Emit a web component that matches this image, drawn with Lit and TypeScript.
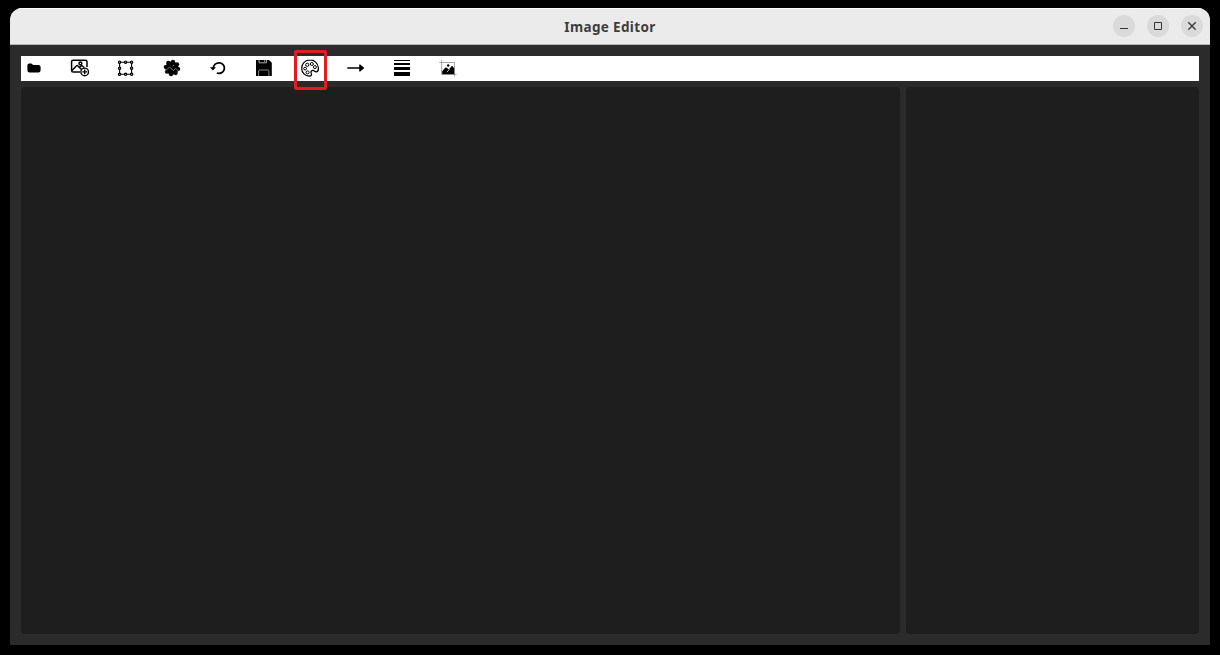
import { LitElement, html, css, svg } from "lit";
import { customElement } from "lit/decorators.js";

const glyphs = [
  { name: "Open", art: svg`<path d="M3.4 7.2Q3.4 5.4 5.2 5.4H7.2Q8.4 5.4 9 6.9H14.5Q16.6 7 16.6 9V12.2Q16.6 14.4 14.4 14.4H5.6Q3.4 14.4 3.4 12.2Z"/>` },
  { name: "Add image", art: svg`<g fill="none" stroke="#000" stroke-width="1.5" stroke-linejoin="round">
      <path d="M10 14H3.2Q1.6 14 1.6 12.4V3.6Q1.6 2.2 3.2 2.2H15.4Q17 2.2 17 3.8V9"/>
      <path d="M2 12.5L6.3 8Q7.1 7.1 8 8L11.5 11.5"/><circle cx="10.4" cy="5.4" r="1.4"/>
      <path d="M9.5 9.2L11 8Q12 7.4 13 8.5L14.2 9.5"/></g>
      <circle cx="14.7" cy="13.9" r="3.8" fill="#fff" stroke="#000" stroke-width="1.4"/>
      <path d="M14.7 11.5V16.3M12.3 13.9H17.1" stroke="#000" stroke-width="1.4"/>` },
  { name: "Select", art: svg`<path d="M3.6 4.2H15.6V16.3H3.6Z" fill="none" stroke="#000" stroke-width="1.1"/>
      ${[[3.6,4.2],[9.6,4.2],[15.6,4.2],[3.6,10.2],[15.6,10.2],[3.6,16.3],[9.6,16.3],[15.6,16.3]].map(
        ([x, y]) => svg`<circle cx=${x} cy=${y} r="1.2" fill="#999" stroke="#000" stroke-width="1.1"/>`)}` },
  { name: "Filter", art: svg`<circle cx="10" cy="10" r="6.7"/>
      ${Array.from({ length: 8 }, (_, i) => {
        const a = ((i + 0.2) * Math.PI) / 4;
        return svg`<circle cx=${10 + 6.3 * Math.cos(a)} cy=${10 + 6.3 * Math.sin(a)} r="2.1"/>`;
      })}
      <path d="M3 13.4L7 9.5Q7.6 8.9 8.2 9.5L11.3 12.7L13.2 10.8Q13.7 10.4 14.2 10.9L16.8 13.4M10.6 8L12 7.2" fill="none" stroke="#aaa" stroke-width=".7"/>` },
  { name: "Undo", art: svg`<path d="M5.4 10.2A5.5 5.3 0 1 1 8.8 15" fill="none" stroke="#000" stroke-width="1.75"/><path d="M1.9 9.2H8L4.9 12.4Z"/>` },
  { name: "Save", art: svg`<path d="M2 2H15L17.8 4.8V18H2Z"/>
      <path d="M5 2V4.8H12.6V2" fill="none" stroke="#bbb" stroke-width=".9"/><rect x="10.2" y="2.3" width="1.1" height="1.5" fill="#bbb"/>
      <path d="M4.6 18V13Q4.6 12 5.6 12H13.9Q14.9 12 14.9 13V18" fill="none" stroke="#aaa" stroke-width=".8"/>` },
  { name: "Colors", art: svg`<g fill="none" stroke="#000" stroke-width="1.25">
      <path d="M10 1.9C5.2 1.9 1.7 5.7 1.7 10.2C1.7 14.8 5.3 18.1 9.2 18.1C11.5 18.1 12 16.5 11.2 15.1C10.5 13.7 11.5 12.1 13.1 12.4C14.4 12.7 14.8 14 16.4 13.8C18 13.5 18.6 11.5 18.4 9.8C18 5.2 14.3 1.9 10 1.9Z"/>
      <g stroke-width="1"><circle cx="5.1" cy="10.6" r="1.4"/><circle cx="7.3" cy="6.8" r="1.6"/><circle cx="11.8" cy="6" r="1.5"/><circle cx="14.9" cy="9.1" r="1.5"/><circle cx="7.6" cy="14.4" r="1.5"/></g></g>` },
  { name: "Arrow", art: svg`<path d="M1.3 9.3H14V10.7H1.3ZM13.2 6.6L14.2 6.5L18.4 10L14.2 13.5L13.2 13.4Z"/>` },
  { name: "Line width", art: svg`<path d="M2 2H18V3H2ZM2 5H18V7H2ZM2 9H18V12H2ZM2 14H18V18H2Z"/>` },
  { name: "Crop", art: svg`<path d="M1.3 4.5H16.5V18.5M3.6 2V16.3H18.5" fill="none" stroke="#888" stroke-width=".75"/>
      <path d="M4.2 13.2L7.2 9.8Q8 9 8.8 9.8L10.8 11.6L14 7.8L16.2 10.2V16.2H4.2Z"/><path d="M8.9 14.2L11.6 11.2" stroke="#fff" stroke-width=".7"/><circle cx="10.2" cy="7.5" r="1.2"/>` },
];

@customElement("app-root")
export class AppRoot extends LitElement {
  static styles = css`
    :host { display: block; box-sizing: border-box; height: 655px; padding: 8px 10px 10px; background: #000; overflow: hidden; }
    .window { height: 637px; box-sizing: border-box; display: flex; flex-direction: column; background: #2b2b2b; border-radius: 12px 12px 0 0; overflow: hidden; }
    .titlebar { box-sizing: border-box; height: 37px; flex: none; display: grid; grid-template-columns: 1fr auto 1fr; align-items: center; background: #ebebeb; border-top: 1px solid #fafafa; border-bottom: 1px solid #b5b5b5; padding: 0 7px; }
    .title { grid-column: 2; font: 700 13.5px/20px "Noto Sans", "Open Sans", sans-serif; letter-spacing: .35px; color: #3d3d3d; padding-top: 1px; white-space: nowrap; }
    .controls { display: flex; justify-content: flex-end; gap: 12px; padding-bottom: 2px; }
    .control { width: 22px; height: 22px; padding: 0; border: 0; border-radius: 50%; background: #dadada; }
    .control svg { display: block; }
    .content { flex: 1; display: flex; flex-direction: column; gap: 6px; padding: 11px; min-height: 0; }
    .toolbar { height: 25px; flex: none; display: flex; gap: 20px; background: #fff; }
    .tool { position: relative; width: 26px; height: 25px; padding: 2px 3px 3px; box-sizing: border-box; border: 0; background: none; }
    .tool svg { display: block; }
    .marker { position: absolute; left: -3px; top: -6px; width: 33px; height: 40px; box-sizing: border-box; border: 3px solid #e31b23; border-radius: 2px; }
    .panels { flex: 1; display: grid; grid-template-columns: 879px 293px; gap: 6px; }
    .panel { background: #1e1e1e; border-radius: 4px; }
  `;

  render() {
    return html`
      <div class="window">
        <header class="titlebar">
          <div class="title">Image Editor</div>
          <div class="controls">
            ${[svg`<path d="M7 13.5H15"/>`, svg`<path d="M7.5 7.5H14.5V14.5H7.5Z"/>`, svg`<path d="M7.3 7.3L14.7 14.7M14.7 7.3L7.3 14.7" stroke-width="1.3"/>`].map(
              (mark) => html`<button class="control"><svg width="22" height="22" fill="none" stroke="#363636">${mark}</svg></button>`)}
          </div>
        </header>
        <main class="content">
          <nav class="toolbar">
            ${glyphs.map((g) => html`<button class="tool"><svg width="20" height="20" viewBox="0 0 20 20">${g.art}</svg>${g.name === "Colors" ? html`<span class="marker"></span>` : ""}</button>`)}
          </nav>
          <div class="panels"><section class="panel"></section><section class="panel"></section></div>
        </main>
      </div>`;
  }
}
